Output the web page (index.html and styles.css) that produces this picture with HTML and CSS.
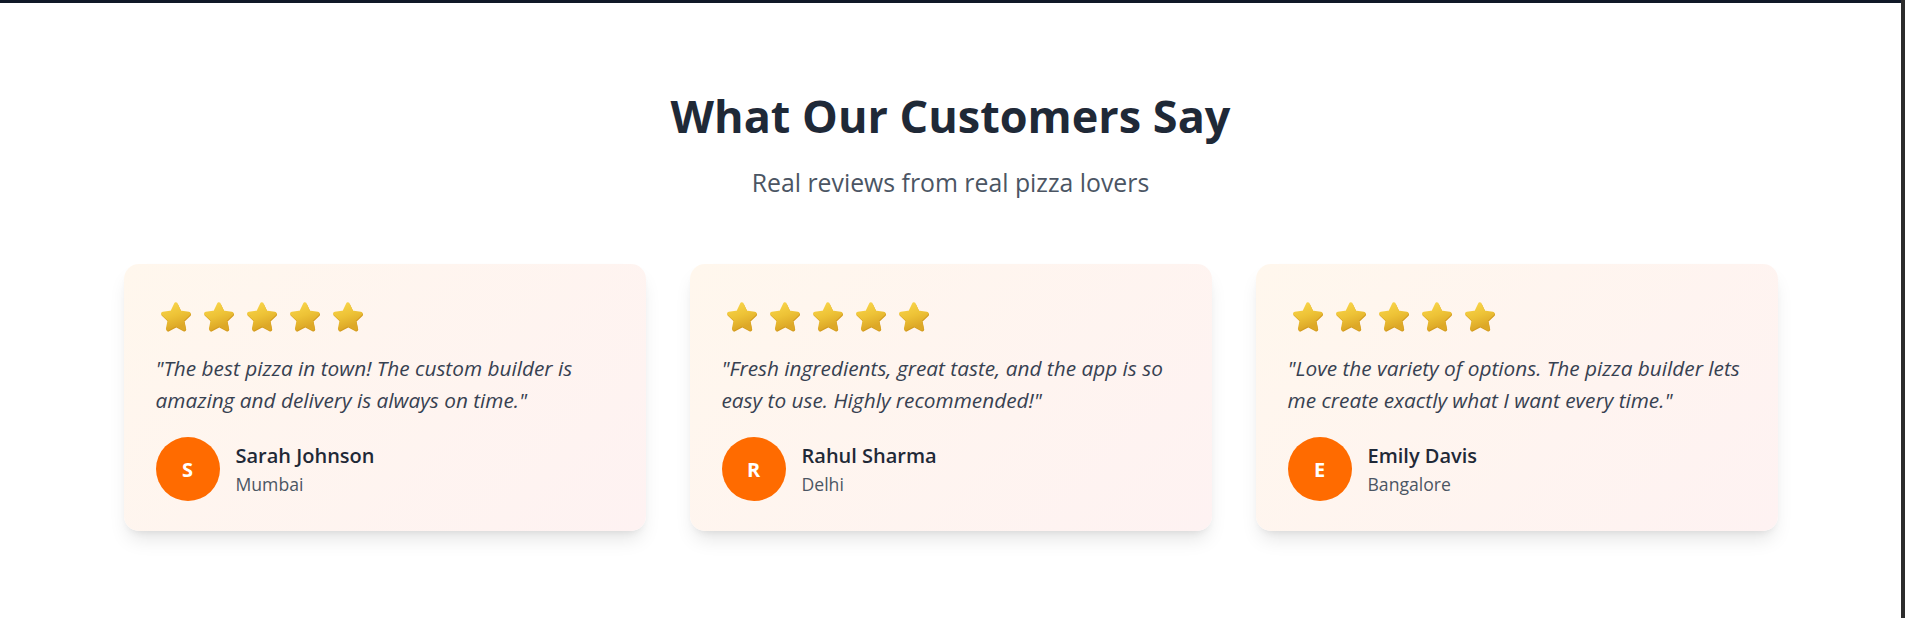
FILE: index.html
```html
<!DOCTYPE html>
<html lang="en">
<head>
<meta charset="utf-8">
<title>What Our Customers Say</title>
<link rel="stylesheet" href="styles.css">
</head>
<body>
<svg width="0" height="0" class="defs" aria-hidden="true">
  <defs>
    <linearGradient id="starFill" x1="0" y1="0" x2="0.35" y2="1">
      <stop offset="0" stop-color="#f9d54a"/>
      <stop offset="0.55" stop-color="#edc236"/>
      <stop offset="1" stop-color="#dda827"/>
    </linearGradient>
    <symbol id="star" viewBox="1.8 1.6 20.6 20.6">
      <path d="M12 3.2l2.7 5.6 6.1.8-4.5 4.2 1.2 6.1L12 17l-5.5 2.9 1.2-6.1-4.5-4.2 6.1-.8z" fill="#d39a1c" stroke="#d39a1c" stroke-width="2.6" stroke-linejoin="round" transform="translate(0.3 0.7)"/>
      <path d="M12 3.2l2.7 5.6 6.1.8-4.5 4.2 1.2 6.1L12 17l-5.5 2.9 1.2-6.1-4.5-4.2 6.1-.8z" fill="url(#starFill)" stroke="url(#starFill)" stroke-width="2.6" stroke-linejoin="round"/>
    </symbol>
  </defs>
</svg>
<div class="page">
  <main class="main">
    <div class="topbar"></div>
    <section class="testimonials">
      <h2 class="title">What Our Customers Say</h2>
      <p class="subtitle">Real reviews from real pizza lovers</p>
      <div class="grid">
        <article class="card">
          <div class="stars">
            <svg class="star"><use href="#star"/></svg><svg class="star"><use href="#star"/></svg><svg class="star"><use href="#star"/></svg><svg class="star"><use href="#star"/></svg><svg class="star"><use href="#star"/></svg>
          </div>
          <p class="quote">"The best pizza in town! The custom builder is amazing and delivery is always on time."</p>
          <div class="author">
            <div class="avatar">S</div>
            <div class="who">
              <div class="name">Sarah Johnson</div>
              <div class="city">Mumbai</div>
            </div>
          </div>
        </article>
        <article class="card">
          <div class="stars">
            <svg class="star"><use href="#star"/></svg><svg class="star"><use href="#star"/></svg><svg class="star"><use href="#star"/></svg><svg class="star"><use href="#star"/></svg><svg class="star"><use href="#star"/></svg>
          </div>
          <p class="quote">"Fresh ingredients, great taste, and the app is so easy to use. Highly recommended!"</p>
          <div class="author">
            <div class="avatar">R</div>
            <div class="who">
              <div class="name">Rahul Sharma</div>
              <div class="city">Delhi</div>
            </div>
          </div>
        </article>
        <article class="card">
          <div class="stars">
            <svg class="star"><use href="#star"/></svg><svg class="star"><use href="#star"/></svg><svg class="star"><use href="#star"/></svg><svg class="star"><use href="#star"/></svg><svg class="star"><use href="#star"/></svg>
          </div>
          <p class="quote">"Love the variety of options. The pizza builder lets me create exactly what I want every time."</p>
          <div class="author">
            <div class="avatar">E</div>
            <div class="who">
              <div class="name">Emily Davis</div>
              <div class="city">Bangalore</div>
            </div>
          </div>
        </article>
      </div>
    </section>
  </main>
  <div class="rail"></div>
</div>
</body>
</html>
```

FILE: styles.css
```css
* { box-sizing: border-box; }
html, body { margin: 0; padding: 0; }
body {
  background: #ffffff;
  font-family: "Open Sans", "Noto Sans", sans-serif;
  color: #1f2937;
}
.defs { position: absolute; width: 0; height: 0; overflow: hidden; }
.page {
  display: flex;
  min-height: 618px;
}
.main { flex: 1; min-width: 0; }
.rail { width: 4px; background: #2c2c2c; flex: none; }
.topbar { height: 3px; background: #101828; }

.testimonials {
  padding: 85px 0 60px;
  text-align: center;
}
.title {
  margin: 0;
  font-size: 45px;
  line-height: 56px;
  font-weight: 700;
  color: #1f2937;
}
.subtitle {
  margin: 22px 0 0;
  font-size: 24.8px;
  line-height: 32px;
  color: #4b5563;
}
.grid {
  width: 1654px;
  margin: 66px auto 0;
  display: grid;
  grid-template-columns: repeat(3, 1fr);
  gap: 44px;
  text-align: left;
}
.card {
  background: linear-gradient(135deg, #fff7ed 0%, #fef2f2 100%);
  border-radius: 15px;
  padding: 38px 32px 30px;
  box-shadow: 0 12px 19px -4px rgba(0, 0, 0, 0.1), 0 5px 8px -5px rgba(0, 0, 0, 0.1);
}
.stars {
  display: flex;
  gap: 13px;
  padding-left: 5px;
  height: 30px;
}
.star { width: 30px; height: 30px; display: block; }
.quote {
  margin: 20px -4px 0 0;
  font-style: italic;
  font-size: 20.8px;
  line-height: 32px;
  color: #374151;
}
.author {
  margin-top: 21px;
  display: flex;
  align-items: center;
  gap: 16px;
}
.avatar {
  width: 64px;
  height: 64px;
  border-radius: 50%;
  background: #ff6b00;
  color: #ffffff;
  font-weight: 700;
  font-size: 20px;
  display: flex;
  align-items: center;
  justify-content: center;
  flex: none;
}
.who { padding-top: 2px; }
.name {
  font-size: 20px;
  line-height: 26px;
  font-weight: 600;
  color: #1f2937;
}
.city {
  margin-top: 2px;
  font-size: 17.6px;
  line-height: 26px;
  color: #4b5563;
}
```
